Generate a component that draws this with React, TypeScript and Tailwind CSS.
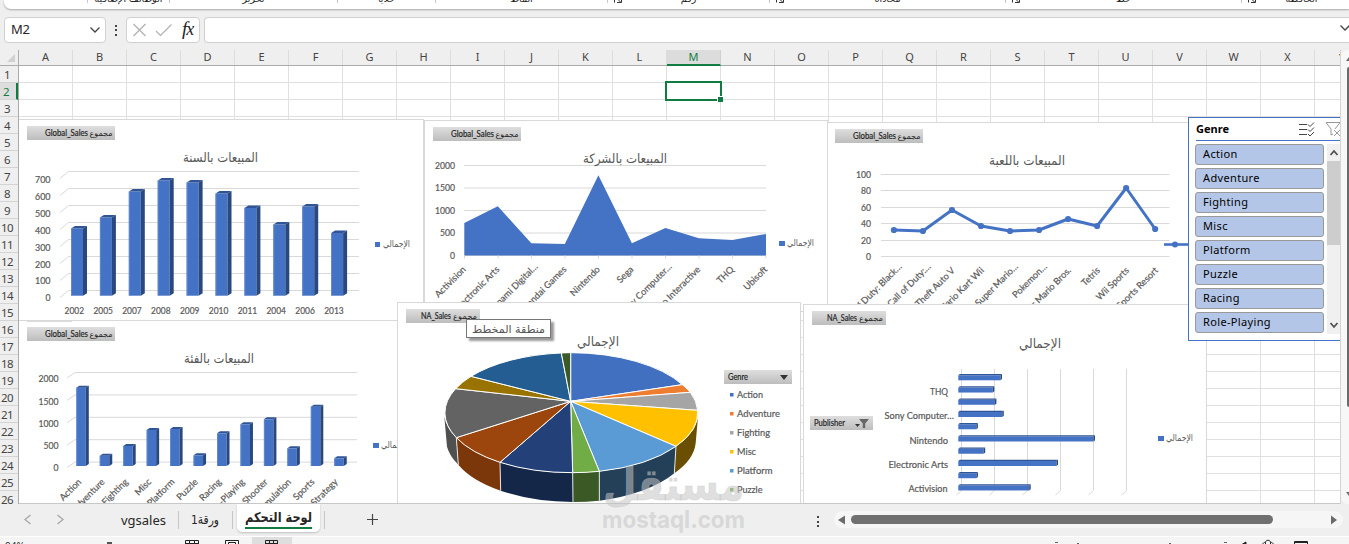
import type { ReactNode } from "react";

const BLUE = "#4472c4";
const TOP = "#2f5597";
const SIDE = "#29487f";
const GRID = "#d9d9d9";
const TEXT = "#595959";
const LATIN = '"Lato","DejaVu Sans",sans-serif';
const ARABIC = '"DejaVu Sans",sans-serif';

type Pt = [number, number];

function Label({ x, y, children, anchor = "start", size = 9, width, rotate, fill = TEXT }: {
  x: number; y: number; children: string; anchor?: "start" | "middle" | "end"; size?: number; width?: number; rotate?: boolean; fill?: string;
}) {
  return (
    <text
      x={x}
      y={y}
      fill={fill}
      fontSize={size}
      fontFamily={LATIN}
      stroke={fill}
      strokeWidth={0.2}
      textAnchor={anchor}
      textLength={width}
      lengthAdjust="spacingAndGlyphs"
      transform={rotate ? `rotate(-45 ${x} ${y})` : undefined}
    >
      {children}
    </text>
  );
}

function Arabic({ x, y, width, size, children, fill = TEXT }: { x: number; y: number; width: number; size: number; children: string; fill?: string }) {
  return (
    <text x={x} y={y} fill={fill} fontSize={size} fontFamily={ARABIC} textLength={width} lengthAdjust="spacingAndGlyphs">
      {children}
    </text>
  );
}

function FieldButton({ x, y, w, name, textX, children }: { x: number; y: number; w: number; name?: string; textX: number; children?: ReactNode }) {
  return (
    <g>
      <rect x={x} y={y} width={w} height={14} fill="url(#fieldFill)" />
      {name && (
        <>
          <Label x={textX} y={y + 10} size={8.5} width={w > 80 ? 43 : 30} fill="#262626">{name}</Label>
          <Arabic x={textX + (w > 80 ? 44.5 : 32)} y={y + 10} width={w > 80 ? 23 : 24} size={8} fill="#262626">مجموع</Arabic>
        </>
      )}
      {children}
    </g>
  );
}

function Chart({ x, y, w, h, className, children }: { x: number; y: number; w: number; h: number; className: string; children: ReactNode }) {
  return (
    <div className={`absolute border border-[#d9d9d9] bg-white overflow-hidden ${className}`}>
      <svg width={w} height={h} viewBox={`${x} ${y} ${w} ${h}`} className="block">
        <defs>
          <linearGradient id="fieldFill" x1="0" y1="0" x2="0" y2="1">
            <stop offset="0" stopColor="#dedede" />
            <stop offset="1" stopColor="#bdbdbd" />
          </linearGradient>
        </defs>
        {children}
      </svg>
    </div>
  );
}

function Column({ x, y, w, bottom, dx, dy }: { x: number; y: number; w: number; bottom: number; dx: number; dy: number }) {
  return (
    <g>
      <rect x={x} y={y} width={w} height={bottom - y} fill={BLUE} />
      <path d={`M${x} ${y}l${dx} ${-dy}h${w}l${-dx} ${dy}z`} fill={TOP} />
      <path d={`M${x + w} ${y}l${dx} ${-dy}V${bottom - dy}l${-dx} ${dy}z`} fill={SIDE} />
      <path d={`M${x + 0.5} ${y}V${bottom}`} stroke="#6a8fd2" strokeWidth={0.8} />
    </g>
  );
}

const yearTops = [228.5, 217.5, 191.5, 180.5, 182.5, 193.5, 208, 224.5, 206.5, 233];
const years = ["2002", "2005", "2007", "2008", "2009", "2010", "2011", "2004", "2006", "2013"];

function YearChart() {
  return (
    <Chart x={19} y={120} w={404} h={200} className="left-[-1px] top-[53px] w-[406px] h-[202px]">
      <FieldButton x={27} y={126} w={88} name="Global_Sales" textX={45} />
      <Arabic x={183} y={162} width={75} size={13}>المبيعات بالسنة</Arabic>
      {[700, 600, 500, 400, 300, 200, 100, 0].map((v, i) => (
        <g key={v}>
          <path d={`M60 ${178.5 + i * 17}L68.5 ${171.5 + i * 17}H359`} fill="none" stroke={GRID} />
          <Label x={50.5} y={183.3 + i * 16.85} anchor="end" width={v ? 15.5 : 5}>{String(v)}</Label>
        </g>
      ))}
      {yearTops.map((t, i) => (
        <g key={i}>
          <Column x={71 + i * 28.9} y={t} w={12} bottom={295.7} dx={4} dy={2.5} />
          <Label x={74.3 + i * 28.85} y={314} anchor="middle" width={19.5}>{years[i]}</Label>
        </g>
      ))}
      <rect x={375} y={242} width={5} height={5} fill={BLUE} />
      <Arabic x={383} y={246.5} width={27} size={9}>الإجمالي</Arabic>
    </Chart>
  );
}

const companies = ["Activision", "Electronic Arts", "Konami Digital…", "Namco Bandai Games", "Nintendo", "Sega", "Sony Computer…", "Take-Two Interactive", "THQ", "Ubisoft"];

function CompanyChart() {
  const ys = [223, 206.3, 243.3, 244, 175.3, 243.3, 228, 238.3, 240, 234];
  const line = ys.map((v, i) => `${464.3 + i * 33.52},${v}`).join(" ");
  return (
    <Chart x={425} y={121} w={402} h={190} className="left-[405px] top-[54px] w-[404px] h-[192px]">
      <FieldButton x={433} y={127} w={88} name="Global_Sales" textX={451} />
      {[2000, 1500, 1000, 500, 0].map((v, i) => (
        <g key={v}>
          <path d={`M464 ${165.5 + i * 22.5}H766`} stroke={GRID} />
          <Label x={455} y={169 + i * 22.4} anchor="end" width={v > 999 ? 20 : v ? 15 : 5}>{String(v)}</Label>
        </g>
      ))}
      <Arabic x={583} y={163} width={84} size={13}>المبيعات بالشركة</Arabic>
      <polygon points={`464.3,255.5 ${line} 766,255.5`} fill={BLUE} />
      {companies.map((c, i) => (
        <g key={c}>
          <path d={`M${464.5 + i * 33.5} 255.5v3`} stroke={GRID} />
          <Label x={466.5 + i * 33.5 + (c.endsWith("…") ? 5 : 0)} y={c.endsWith("…") ? 267 : 270} anchor="end" rotate size={9.2}>{c}</Label>
        </g>
      ))}
      <rect x={779} y={241} width={6} height={5} fill={BLUE} />
      <Arabic x={787} y={245.5} width={27} size={9}>الإجمالي</Arabic>
    </Chart>
  );
}

const games = ["Call of Duty: Black…", "Call of Duty:…", "Grand Theft Auto V", "Mario Kart Wii", "New Super Mario…", "Pokemon…", "Super Mario Bros.", "Tetris", "Wii Sports", "Wii Sports Resort"];

function GameChart() {
  const pts: Pt[] = [230, 231, 210, 226, 231, 230, 219, 226, 188, 229].map((v, i) => [893.9 + i * 29.03, v]);
  return (
    <Chart x={828} y={123} w={376} h={182} className="left-[808px] top-[56px] w-[378px] h-[183px]">
      <FieldButton x={835} y={129} w={88} name="Global_Sales" textX={853} />
      <Arabic x={989} y={165} width={76} size={13}>المبيعات باللعبة</Arabic>
      {[100, 80, 60, 40, 20, 0].map((v, i) => (
        <g key={v}>
          <path d={`M881 ${Math.round(174 + i * 16.4) + 0.5}H1169.5`} stroke={GRID} />
          <Label x={871} y={178 + i * 16.4} anchor="end" width={v > 99 ? 15 : v ? 10 : 5}>{String(v)}</Label>
        </g>
      ))}
      <polyline points={pts.map((p) => p.join(",")).join(" ")} fill="none" stroke={BLUE} strokeWidth={3} strokeLinejoin="round" />
      {pts.map(([x, y], i) => (
        <g key={i}>
          <circle cx={x} cy={y} r={3.1} fill={BLUE} />
          <Label x={x + (games[i].endsWith("…") ? 8.5 : 3.5)} y={games[i].endsWith("…") ? 267 : 271} anchor="end" rotate size={9.2}>{games[i]}</Label>
        </g>
      ))}
      <path d="M1164 244.5H1190" stroke={BLUE} strokeWidth={2.6} />
      <circle cx={1175} cy={244.5} r={3} fill={BLUE} />
    </Chart>
  );
}

const genreTops = [233, 437, 408, 360, 357, 436, 370, 343, 328, 415, 290, 445];
const genres = ["Action", "Adventure", "Fighting", "Misc", "Platform", "Puzzle", "Racing", "Role-Playing", "Shooter", "Simulation", "Sports", "Strategy"];

function GenreChart() {
  return (
    <Chart x={19} y={321} w={404} h={184} className="left-[-1px] top-[254px] w-[406px] h-[186px]">
      <path d="M27 321.5h45" stroke="#dcdcdc" />
      <FieldButton x={27} y={327} w={88} name="Global_Sales" textX={45} />
      <Arabic x={184} y={362.5} width={70} size={13}>المبيعات بالفئة</Arabic>
      {[2000, 1500, 1000, 500, 0].map((v, i) => (
        <g key={v}>
          <path d={`M67 ${378 + i * 22.4}L75 ${372.5 + i * 22.4}H357`} fill="none" stroke={GRID} />
          <Label x={58.5} y={382.3 + i * 22.2} anchor="end" width={v > 999 ? 20 : v ? 15 : 5}>{String(v)}</Label>
        </g>
      ))}
      {genres.map((g, i) => (
        <g key={g}>
          <Column x={76.3 + i * 23.45} y={310 + genreTops[i] / 3} w={9.5} bottom={466} dx={3} dy={2} />
          <Label x={82 + i * 23.3} y={482.5} anchor="end" rotate size={9.2}>{g}</Label>
        </g>
      ))}
      <rect x={373} y={443} width={6} height={5} fill={BLUE} />
      <Arabic x={381} y={447.5} width={27} size={9}>الإجمالي</Arabic>
    </Chart>
  );
}

const rim: Pt[] = [
  [527, 158], [862, 254], [886, 277], [908, 331], [843, 439], [613, 514], [533, 518], [315, 487], [184, 413], [182, 266], [228, 229], [499, 159],
];
const sliceFills = ["#4170c1", "#ed7d31", "#a5a5a5", "#ffc000", "#5b9bd5", "#70ad47", "#234178", "#9c450c", "#636363", "#997300", "#235d92", "#3b5a25"];
const sides: { from: Pt; to: Pt; toLow: Pt; fromLow: Pt; fill: string }[] = [
  { from: [909, 350], to: [843, 439], toLow: [838, 520], fromLow: [902, 430], fill: "#6a4f03" },
  { from: [843, 439], to: [613, 514], toLow: [613, 602], fromLow: [838, 520], fill: "#243f58" },
  { from: [613, 514], to: [533, 518], toLow: [534, 606], fromLow: [613, 602], fill: "#3a5924" },
  { from: [533, 518], to: [315, 487], toLow: [317, 572], fromLow: [534, 606], fill: "#142748" },
  { from: [315, 487], to: [184, 413], toLow: [190, 494], fromLow: [317, 572], fill: "#7b360a" },
  { from: [184, 413], to: [148, 350], toLow: [156, 440], fromLow: [190, 494], fill: "#505050" },
];

function PieChart() {
  return (
    <Chart x={398} y={303} w={402} h={202} className="left-[378px] top-[236px] w-[404px] h-[204px]">
      <FieldButton x={406} y={309} w={74} name="NA_Sales" textX={421} />
      <g transform="translate(395 300) scale(.33333)" strokeLinejoin="round">
        {sides.map((s) => (
          <path
            key={s.fill}
            d={`M${s.from}A381 180 0 0 1 ${s.to}L${s.toLow}A374 176 0 0 0 ${s.fromLow}Z`}
            fill={s.fill}
          />
        ))}
        {sides.slice(1).map((s) => (
          <path key={s.fill} d={`M${s.from}L${s.fromLow}`} stroke="#fff" strokeWidth={2.5} />
        ))}
        {rim.map((p, i) => {
          const next = rim[(i + 1) % rim.length];
          return <path key={i} d={`M527 304L${p}A381 180 0 0 1 ${next}Z`} fill={sliceFills[i]} stroke="#fff" strokeWidth={3} />;
        })}
      </g>
      <Arabic x={577} y={346} width={42} size={13}>الإجمالي</Arabic>
      <FieldButton x={724} y={370} w={68} textX={728}>
        <Label x={728} y={380} size={8.5} width={20} fill="#262626">Genre</Label>
        <path d="M780 375h8l-4 5z" fill="#333" />
      </FieldButton>
      {["Action", "Adventure", "Fighting", "Misc", "Platform", "Puzzle"].map((g, i) => (
        <g key={g}>
          <rect x={730} y={393 + i * 19} width={3.5} height={3.5} fill={sliceFills[i]} />
          <Label x={737} y={398.3 + i * 18.95} size={9.5} width={[26, 43, 33, 19, 35.5, 25.5][i]}>{g}</Label>
        </g>
      ))}
    </Chart>
  );
}

const barEnds = [1002, 994.3, 996.4, 1003.8, 977.9, 1095, 985.2, 1058, 977.9, 1030.7];

function PublisherChart() {
  return (
    <Chart x={804} y={305} w={402} h={200} className="left-[784px] top-[238px] w-[404px] h-[202px]">
      <FieldButton x={812} y={311} w={74} name="NA_Sales" textX={827} />
      <Arabic x={1019} y={348} width={42} size={13}>الإجمالي</Arabic>
      {[961.5, 994.5, 1027.5, 1060.5, 1093.5, 1126.5].map((x) => (
        <path key={x} d={`M${x} 369V490.5l-5 4.5`} fill="none" stroke={GRID} />
      ))}
      {barEnds.map((e, i) => {
        const y = 375.3 + i * 12.24;
        return (
          <g key={i}>
            <rect x={958.3} y={y} width={e - 958.3 - 1.5} height={5} fill={BLUE} />
            <path d={`M958.3 ${y}l1.5 -1.3H${e}l-1.5 1.3z`} fill={TOP} />
            <path d={`M${e - 1.5} ${y}l1.5 -1.3v5l-1.5 1.3z`} fill={SIDE} />
          </g>
        );
      })}
      <Label x={948} y={395.3} anchor="end" width={18}>THQ</Label>
      <Label x={954} y={419.3} anchor="end" width={69.5}>Sony Computer…</Label>
      <Label x={948} y={443.5} anchor="end" width={38.5}>Nintendo</Label>
      <Label x={948} y={468} anchor="end" width={59.5}>Electronic Arts</Label>
      <Label x={947.5} y={492} anchor="end" width={39}>Activision</Label>
      <FieldButton x={810} y={416} w={63} textX={814}>
        <Label x={814} y={426} size={8.5} width={31} fill="#262626">Publisher</Label>
        <path d="M855 424h5l-2.5 3z" fill="#333" />
        <path d="M859 419h10l-3.8 4.5v4.5h-2.4v-4.5z" fill="#666" />
      </FieldButton>
      <rect x={1158} y={436} width={6} height={5} fill={BLUE} />
      <Arabic x={1166} y={440.5} width={27} size={9}>الإجمالي</Arabic>
    </Chart>
  );
}

function Slicer() {
  return (
    <section className="absolute left-[1169px] top-[51px] flex h-[224px] w-[160px] flex-col border border-[#4472c4] bg-white pl-[6px]">
      <header className="ml-px flex h-[23px] w-[150px] shrink-0 items-center border-b border-[#4472c4]">
        <span className="w-[103px] font-['Noto_Sans'] text-[11px] font-bold text-black">Genre</span>
        <svg width="16" height="14" viewBox="0 0 16 14" fill="none" stroke="#444" className="shrink-0">
          <path d="M0 2.5h8M0 7.5h8M0 12.5h8M9 2.5l2 2 4-4M9 7.5l2 2 4-4M9 12l2 2 4-4" />
        </svg>
        <svg width="16" height="16" viewBox="0 0 16 16" fill="none" stroke="#999" className="ml-[10px] shrink-0">
          <path d="M1 1.5h14L10 8M1 1.5L6 8v6l2 -1M9 9l6 6M15 9l-6 6" />
        </svg>
      </header>
      <div className="flex pt-[3px]">
        <ul className="flex w-[129px] shrink-0 flex-col gap-[3px]">
          {["Action", "Adventure", "Fighting", "Misc", "Platform", "Puzzle", "Racing", "Role-Playing"].map((g) => (
            <li key={g} className="flex h-[21px] items-center rounded-[3px] border border-[#999] bg-[#b4c6e7] pl-[7px] font-['Noto_Sans'] text-[11px] tracking-[0.35px] text-black">
              {g}
            </li>
          ))}
        </ul>
        <div className="ml-[3px] flex h-[190px] w-[14px] shrink-0 flex-col items-center bg-[#f0f0f0]">
          <svg width="14" height="17" fill="none" stroke="#505050" strokeWidth="1.8"><path d="M3.5 11l3.5-4 3.5 4" /></svg>
          <div className="h-[84px] w-full bg-[#cdcdcd]" />
          <div className="flex-1" />
          <svg width="14" height="17" fill="none" stroke="#505050" strokeWidth="1.8"><path d="M3.5 6l3.5 4 3.5-4" /></svg>
        </div>
      </div>
    </section>
  );
}

const ribbon = [
  { w: "w-[84px]", t: "" },
  { w: "w-[82px]", t: "الوظائف الإضافية" },
  { w: "w-[168px]", t: "تحرير" },
  { w: "w-[98px]", t: "خلايا" },
  { w: "w-[172px]", t: "أنماط" },
  { w: "w-[162px]", t: "رقم", l: true },
  { w: "w-[236px]", t: "محاذاة", l: true },
  { w: "w-[236px]", t: "خط", l: true },
  { w: "w-[120px]", t: "الحافظة", l: true },
];

const letters = "ABCDEFGHIJKLMNOPQRSTUVWX".split("");
const rows = Array.from({ length: 26 }, (_, i) => i + 1);

export default function App() {
  return (
    <div className="relative flex h-[544px] w-[1349px] flex-col overflow-hidden bg-[#efefef] font-['Noto_Sans','DejaVu_Sans',sans-serif]">
      <div className="ml-1 flex h-[9px] shrink-0 overflow-hidden rounded-bl-[7px] bg-white shadow-[0_1px_2px_rgba(0,0,0,0.3)]">
        {ribbon.map((r, i) => (
          <div key={i} className={`relative flex h-[3px] shrink-0 justify-center border-r border-[#c8c8c8] ${r.w}`}>
            <span dir="rtl" className="-mt-[8px] h-[20px] whitespace-nowrap font-['DejaVu_Sans'] text-[9.5px] leading-[14px] text-[#222]">{r.t}</span>
            {r.l && (
              <svg width="9" height="3" fill="none" stroke="#333" className="absolute left-[5px] top-0">
                <path d="M1.5 0v2.500M4 2.500h4.500V0M5.500 0l2 2" />
              </svg>
            )}
          </div>
        ))}
      </div>

      <div className="mt-[8px] flex h-[26px] shrink-0 pl-1">
        <div className="flex w-[102px] items-center justify-between rounded-[4px] border border-[#d0d0d0] bg-white pl-[6px] pr-[5px] text-[13px] text-[#262626]">
          <span className="tracking-[-0.3px]">M2</span>
          <svg width="10" height="6" fill="none" stroke="#444" strokeWidth="1.3"><path d="M.5.5L5 5 9.500.5" /></svg>
        </div>
        <div className="flex w-[20px] flex-col items-center justify-center gap-[2.5px]">
          <i className="size-[2px] bg-[#444]" /><i className="size-[2px] bg-[#444]" /><i className="size-[2px] bg-[#444]" />
        </div>
        <div className="flex w-[74px] items-center rounded-[4px] border border-[#d0d0d0] bg-white pl-[6px]">
          <svg width="40" height="14" fill="none" stroke="#b0b0b0" strokeWidth="1.2">
            <path d="M.5 1l12 12M12.500 1l-12 12M23 8l4.500 4.500L38.500 1.500" />
          </svg>
          <span className="ml-[9px] -mt-[3px] font-['Liberation_Serif'] text-[19px] font-medium italic leading-[20px] text-[#222]">
            f<span className="-ml-px inline-block text-[18px]">x</span>
          </span>
        </div>
        <div className="ml-1 flex flex-1 items-center justify-end rounded-l-[4px] border border-r-0 border-[#d0d0d0] bg-white">
          <svg width="9" height="6" fill="none" stroke="#444" strokeWidth="1.3" className="-mt-1"><path d="M.5.5L5 5 9.500.5" /></svg>
        </div>
      </div>

      <div className="mt-[7px] flex h-[454px] shrink-0">
        <div className="flex w-[19px] shrink-0 flex-col overflow-hidden border-r border-[#ababab]">
          <div className="flex h-[16px] shrink-0 items-end justify-end border-b border-[#ababab] pb-[3px] pr-[3px]">
            <svg width="8" height="8"><path d="M8 0v8H0z" fill="#d0d0d0" /></svg>
          </div>
          {rows.map((r) => (
            <div
              key={r}
              className={`flex h-[17px] shrink-0 items-center justify-center border-b border-[#d4d4d4] pr-[4px] pt-[2px] text-[11.5px] tracking-[-0.5px] ${r === 2 ? "border-r-2 border-r-[#107c41] bg-[#dedede] pr-[2px] text-[#107c41]" : "text-[#444]"}`}
            >
              {r}
            </div>
          ))}
        </div>

        <div className="flex w-[1322px] shrink-0 flex-col overflow-hidden border-r border-[#d4d4d4]">
          <div className="flex h-[16px] shrink-0 border-b border-[#ababab]">
            {letters.map((l) => (
              <div
                key={l}
                className={`flex w-[54px] shrink-0 items-center justify-center border-r text-[11px] ${l === "M" ? "-mb-px border-b-2 border-r-[#d0d0d0] border-b-[#107c41] bg-[#dcdcdc] text-[#107c41]" : "border-[#dcdcdc] text-[#444]"}`}
              >
                {l}
              </div>
            ))}
            <div className="w-[54px] shrink-0 pl-[24px] text-[11px] leading-[15px] text-[#444]">Y</div>
          </div>
          <div className="relative flex-1 overflow-hidden border-b border-[#c8c8c8] bg-white">
            {rows.map((r) => (
              <div key={r} className="flex h-[17px] w-[1350px] border-b border-[#e0e0e0]">
                {letters.map((l) => (
                  <div key={l} className="w-[54px] shrink-0 border-r border-[#e0e0e0]" />
                ))}
              </div>
            ))}
            <div className="absolute left-[646px] top-[15px] h-[20px] w-[57px] border-2 border-[#107c41]">
              <i className="absolute bottom-[-3px] right-[-3px] size-[6px] border-l border-t border-white bg-[#107c41]" />
            </div>
            <YearChart />
            <CompanyChart />
            <GameChart />
            <GenreChart />
            <PublisherChart />
            <PieChart />
            <Slicer />
            <div dir="rtl" className="absolute left-[447px] top-[253px] flex h-[19px] w-[85px] items-center justify-center border border-[#767676] bg-white shadow-[3px_3px_2px_rgba(0,0,0,0.4)]">
              <svg width="73" height="17" className="shrink-0">
                <text x="0" y="12.500" direction="ltr" fontSize="11" fill="#555" fontFamily={ARABIC} textLength="73" lengthAdjust="spacingAndGlyphs">منطقة المخطط</text>
              </svg>
            </div>
          </div>
        </div>

        <div className="flex w-[8px] shrink-0 flex-col items-end overflow-hidden rounded-tl-[7px] rounded-bl-[7px] bg-[#f7f7f7]">
          <svg width="3" height="17"><path d="M0 11l3-4v4z" fill="#6b6b6b" /></svg>
          <div className="h-[340px] w-[2px] rounded-tl-[2px] rounded-bl-[2px] bg-[#6b6b6b]" />
          <div className="flex-1" />
          <svg width="3" height="17"><path d="M0 5h3v4z" fill="#6b6b6b" /></svg>
        </div>
      </div>

      <div className="flex h-[32px] shrink-0 items-start">
        <svg width="90" height="30" fill="none" stroke="#a8a8a8" strokeWidth="1.3" className="shrink-0">
          <path d="M30.500 11l-5.500 4.500 5.500 4.500M57.500 11l5.500 4.500-5.500 4.500" />
        </svg>
        <div className="flex h-[32px] w-[88px] shrink-0 items-center justify-end pr-[12px] pt-px text-[13px] text-[#262626]">vgsales</div>
        <div className="mt-[7px] h-[18px] w-px shrink-0 bg-[#c6c6c6]" />
        <div className="flex h-[32px] w-[53px] shrink-0 items-center justify-center">
          <svg width="29" height="22"><text x="0" y="15" fontSize="13" fill="#262626" fontFamily={ARABIC} textLength="28" lengthAdjust="spacingAndGlyphs">ورقة1</text></svg>
        </div>
        <div className="mt-[7px] h-[18px] w-px shrink-0 bg-[#c6c6c6]" />
        <div className="ml-[4px] flex h-[28px] w-[83px] shrink-0 flex-col items-center rounded-b-[5px] bg-white shadow-[0_1px_2px_rgba(0,0,0,0.2)]">
          <svg width="67" height="23" className="shrink-0">
            <text x="0" y="17.500" fontSize="13.500" fontWeight="700" fill="#262626" fontFamily={ARABIC} textLength="67" lengthAdjust="spacingAndGlyphs">لوحة التحكم</text>
          </svg>
          <div className="h-[2px] w-[67px] bg-[#107c41]" />
        </div>
        <div className="ml-[4px] mt-[7px] h-[18px] w-px shrink-0 bg-[#c6c6c6]" />
        <svg width="96" height="30" stroke="#444" strokeWidth="1.200" className="shrink-0"><path d="M42 15.500h11M47.500 10v11" /></svg>
        <div className="ml-[396px] mt-[12px] flex shrink-0 flex-col gap-[2.500px]">
          <i className="size-[2px] bg-[#444]" /><i className="size-[2px] bg-[#444]" /><i className="size-[2px] bg-[#444]" />
        </div>
        <div className="ml-[15px] mt-[7px] flex h-[17px] w-[509px] shrink-0 items-center rounded-full bg-[#f6f6f6]">
          <svg width="17" height="10" className="shrink-0"><path d="M4 5l7-4.500v9z" fill="#6b6b6b" /></svg>
          <div className="h-[9px] w-[422px] shrink-0 rounded-full bg-[#707070]" />
          <svg width="70" height="10" className="shrink-0"><path d="M64 5l-6-4.500v9z" fill="#6b6b6b" /></svg>
        </div>
      </div>

      <div className="flex h-[8px] shrink-0 overflow-hidden border-t border-white bg-[#f5f5f5]">
        <div className="w-[107px] shrink-0 pl-[5px] text-[10px] leading-[10px] text-[#333]"><span className="block pt-[4px]">94%</span></div>
        <div className="mt-[5px] h-[3px] w-[5px] shrink-0 bg-[#555]" />
        <svg width="140" height="8" fill="none" stroke="#222" className="shrink-0">
          <path d="M73.500 8V3.500h13V8M77.500 3v5M82.500 3v5M73 6.500h13" />
          <path d="M113.500 8V3.500h13V8M116.500 8V5.500h7V8" />
        </svg>
        <div className="h-[8px] w-[40px] shrink-0 bg-[#dedede]">
          <svg width="40" height="8" fill="none" stroke="#222"><path d="M13.500 8V3.500h12V8M17.500 3v5M21.500 3v5M13 6.500h12" /></svg>
        </div>
        <svg width="1057" height="8" fill="none" stroke="#222" className="shrink-0">
          <path d="M763 5.500h3M785 6.500h2M877 6.500h2M932 5.500h3" stroke="#666" />
          <path d="M949 8l5-3v3z" fill="#222" />
          <path d="M970.500 8c0-2 2-3 3-2.500 0-3 5-3 5 0 1-.5 3 .5 3 2.500M973.500 5.500v3M978.500 5.500v3" />
          <path d="M1002.500 8V4.500h13V8M1002 5.500h13" />
        </svg>
      </div>

      <svg width="150" height="76" viewBox="600 460 150 76" className="pointer-events-none absolute left-[600px] top-[460px]" fill="#c4c4c4" fillOpacity="0.55">
        <text x="603" y="500" fontFamily={ARABIC} fontWeight="700" fontSize="45" stroke="#c4c4c4" strokeOpacity="0.3" textLength="141" lengthAdjust="spacingAndGlyphs">مستقل</text>
        <text x="602" y="527.500" fontFamily="Inter, sans-serif" fontWeight="700" fontSize="24" textLength="143" lengthAdjust="spacingAndGlyphs">mostaql.com</text>
      </svg>
    </div>
  );
}
